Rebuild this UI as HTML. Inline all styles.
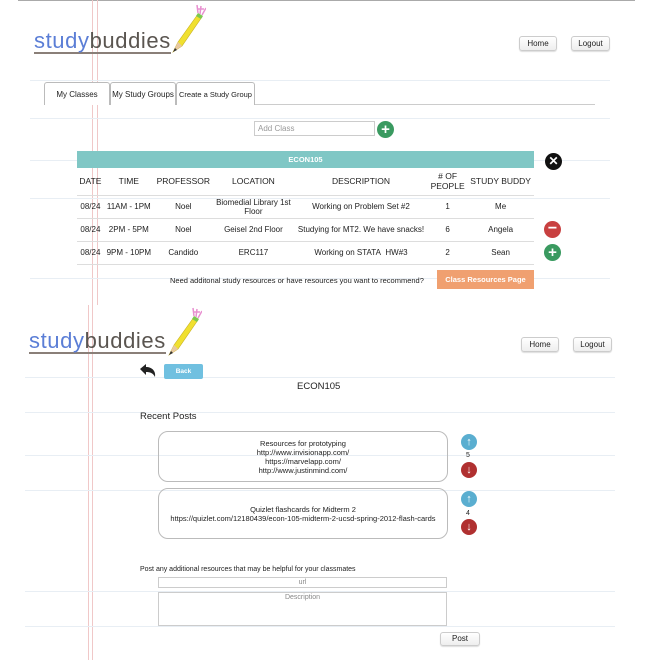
<!DOCTYPE html>
<html><head><meta charset="utf-8"><style>
*{margin:0;padding:0;box-sizing:border-box}
body{width:660px;height:660px;position:relative;background:#fff;font-family:"Liberation Sans",sans-serif;color:#222;overflow:hidden}
.a{position:absolute}
.hl{position:absolute;height:1px;background:#e8eef4}
.vl{position:absolute;width:1px;background:#f0c8c8}
.logo{position:absolute;font-size:22px;letter-spacing:0.6px;font-family:"Liberation Sans",sans-serif;font-weight:normal;border-bottom:2px solid #8a7f78;line-height:20px;padding-bottom:1px}
.logo .s{color:#5b7ed6}.logo .b{color:#5a5550}
.btn{position:absolute;border:1px solid #ccc;border-radius:3px;background:linear-gradient(#fff,#eee);font-size:8px;text-align:center;box-shadow:0 1px 1px #ddd}
.tab{position:absolute;top:82px;height:23px;border:1px solid #bbb;border-bottom:none;border-radius:3px 3px 0 0;font-size:8px;text-align:center;line-height:23px;background:#fff}
table{border-collapse:collapse;font-size:8px}
td,th{text-align:center;border-bottom:1px solid #ddd;padding:0 2px}
th{font-weight:normal;font-size:8.5px}
.circ{position:absolute;border-radius:50%;color:#fff;text-align:center;font-weight:bold}
.post{position:absolute;left:158px;width:290px;border:1px solid #bbb;border-radius:10px;font-size:7.5px;text-align:center;line-height:9px}
</style></head><body>
<div class="a" style="left:18px;top:0;width:617px;height:1px;background:#aaa"></div>
<div class="vl" style="left:92px;top:0;height:305px"></div>
<div class="vl" style="left:97px;top:0;height:305px"></div>
<div class="vl" style="left:88px;top:305px;height:355px"></div>
<div class="vl" style="left:92px;top:305px;height:355px"></div>
<div class="hl" style="left:30px;top:80px;width:580px"></div>
<div class="hl" style="left:30px;top:118px;width:580px"></div>
<div class="hl" style="left:30px;top:160px;width:580px"></div>
<div class="hl" style="left:30px;top:198px;width:580px"></div>
<div class="hl" style="left:30px;top:278px;width:580px"></div>
<div class="hl" style="left:25px;top:377px;width:590px"></div>
<div class="hl" style="left:25px;top:412px;width:590px"></div>
<div class="hl" style="left:25px;top:455px;width:590px"></div>
<div class="hl" style="left:25px;top:490px;width:590px"></div>
<div class="hl" style="left:25px;top:591px;width:590px"></div>
<div class="hl" style="left:25px;top:626px;width:590px"></div>

<div class="logo" style="left:34px;top:31px"><span class="s">study</span><span class="b">buddies</span></div>
<svg class="a" style="left:170px;top:2px" width="36" height="52" viewBox="0 0 36 52"><path d="M3 50 L8 40 L28 12 L32 15 L12 44 Z" fill="#f0e030" stroke="#c8b020" stroke-width="0.6"/><path d="M3 50 L8 40 L12 44Z" fill="#e8c8a0"/><path d="M3 50 L5 46 L7 48Z" fill="#333"/><path d="M26 14 L28 11 L33 14 L31 17Z" fill="#7cc850"/><path d="M28 11 L27 3 M30 12 L31 4 M28 7 L34 7 M32 13 L36 6" stroke="#e890d0" stroke-width="1.5" fill="none"/></svg>
<div class="btn" style="left:519px;top:36px;width:38px;height:15px;line-height:13px">Home</div>
<div class="btn" style="left:571px;top:36px;width:39px;height:15px;line-height:13px">Logout</div>

<div class="a" style="left:44px;top:104px;width:551px;height:1px;background:#ccc"></div>
<div class="tab" style="left:44px;width:66px">My Classes</div>
<div class="tab" style="left:110px;width:66px;background:#fff">My Study Groups</div>
<div class="tab" style="left:176px;width:79px;font-size:7.5px">Create a Study Group</div>

<div class="a" style="left:254px;top:121px;width:121px;height:15px;border:1px solid #ccc;font-size:8px;color:#999;line-height:13px;padding-left:3px">Add Class</div>
<div class="circ" style="left:377px;top:121px;width:17px;height:17px;background:#3a9a60;font-size:15px;line-height:17px">+</div>

<div class="a" style="left:77px;top:151px;width:457px;height:17px;background:#80c7c5;color:#fff;font-size:7.5px;font-weight:bold;text-align:center;line-height:17px">ECON105</div>
<div class="circ" style="left:545px;top:153px;width:17px;height:17px;background:#111;font-size:12px;line-height:17px">✕</div>
<table class="a" style="left:77px;top:168px;width:457px">
<tr style="height:27px"><th>DATE</th><th>TIME</th><th>PROFESSOR</th><th>LOCATION</th><th>DESCRIPTION</th><th>#&nbsp;OF<br>PEOPLE</th><th>STUDY BUDDY</th></tr>
<tr style="height:23px"><td>08/24</td><td>11AM - 1PM</td><td>Noel</td><td>Biomedial Library 1st<br>Floor</td><td>Working on Problem Set #2</td><td>1</td><td>Me</td></tr>
<tr style="height:23px"><td>08/24</td><td>2PM - 5PM</td><td>Noel</td><td>Geisel 2nd Floor</td><td>Studying for MT2. We have snacks!</td><td>6</td><td>Angela</td></tr>
<tr style="height:23px"><td>08/24</td><td>9PM - 10PM</td><td>Candido</td><td>ERC117</td><td>Working on STATA&nbsp; HW#3</td><td>2</td><td>Sean</td></tr>
</table>
<div class="circ" style="left:544px;top:221px;width:17px;height:17px;background:#c84040;font-size:16px;line-height:16px">−</div>
<div class="circ" style="left:544px;top:244px;width:17px;height:17px;background:#3a9a60;font-size:15px;line-height:17px">+</div>
<div class="a" style="left:170px;top:276px;font-size:7.5px">Need additonal study resources or have resources you want to recommend?</div>
<div class="a" style="left:437px;top:270px;width:97px;height:19px;background:#f0a070;color:#fff;font-size:7.5px;font-weight:bold;text-align:center;line-height:19px">Class Resources Page</div>

<div class="logo" style="left:29px;top:331px"><span class="s">study</span><span class="b">buddies</span></div>
<svg class="a" style="left:166px;top:305px" width="36" height="52" viewBox="0 0 36 52"><path d="M3 50 L8 40 L28 12 L32 15 L12 44 Z" fill="#f0e030" stroke="#c8b020" stroke-width="0.6"/><path d="M3 50 L8 40 L12 44Z" fill="#e8c8a0"/><path d="M3 50 L5 46 L7 48Z" fill="#333"/><path d="M26 14 L28 11 L33 14 L31 17Z" fill="#7cc850"/><path d="M28 11 L27 3 M30 12 L31 4 M28 7 L34 7 M32 13 L36 6" stroke="#e890d0" stroke-width="1.5" fill="none"/></svg>
<div class="btn" style="left:521px;top:337px;width:38px;height:15px;line-height:13px">Home</div>
<div class="btn" style="left:573px;top:337px;width:39px;height:15px;line-height:13px">Logout</div>
<svg class="a" style="left:139px;top:364px" width="18" height="14" viewBox="0 0 18 14"><path d="M1 5 L7 0 L7 3 C13 3 17 7 16 13 C14 9 11 8 7 8 L7 11 Z" fill="#222"/></svg>
<div class="a" style="left:164px;top:364px;width:39px;height:15px;background:#70c0e0;border-radius:2px;color:#fff;font-size:6.5px;font-weight:bold;text-align:center;line-height:15px">Back</div>
<div class="a" style="left:297px;top:381px;font-size:9.5px">ECON105</div>
<div class="a" style="left:140px;top:411px;font-size:9.5px">Recent Posts</div>

<div class="post" style="top:431px;height:51px;padding-top:7px">Resources for prototyping<br>http://www.invisionapp.com/<br>https://marvelapp.com/<br>http://www.justinmind.com/</div>
<div class="post" style="top:488px;height:51px;padding-top:16px">Quizlet flashcards for Midterm 2<br>https://quizlet.com/12180439/econ-105-midterm-2-ucsd-spring-2012-flash-cards</div>
<div class="circ" style="left:461px;top:434px;width:16px;height:16px;background:#5aaed0;font-size:11px;line-height:16px">↑</div>
<div class="a" style="left:466px;top:452px;font-size:7px">5</div>
<div class="circ" style="left:461px;top:462px;width:16px;height:16px;background:#b03030;font-size:11px;line-height:16px">↓</div>
<div class="circ" style="left:461px;top:491px;width:16px;height:16px;background:#5aaed0;font-size:11px;line-height:16px">↑</div>
<div class="a" style="left:466px;top:510px;font-size:7px">4</div>
<div class="circ" style="left:461px;top:519px;width:16px;height:16px;background:#b03030;font-size:11px;line-height:16px">↓</div>

<div class="a" style="left:140px;top:566px;font-size:7px">Post any additional resources that may be helpful for your classmates</div>
<div class="a" style="left:158px;top:577px;width:289px;height:11px;border:1px solid #ccc;font-size:7px;color:#888;text-align:center;line-height:9px">url</div>
<div class="a" style="left:158px;top:592px;width:289px;height:34px;border:1px solid #ccc;font-size:7px;color:#888;text-align:center;line-height:10px">Description</div>
<div class="btn" style="left:440px;top:632px;width:40px;height:14px;line-height:12px">Post</div>
</body></html>
